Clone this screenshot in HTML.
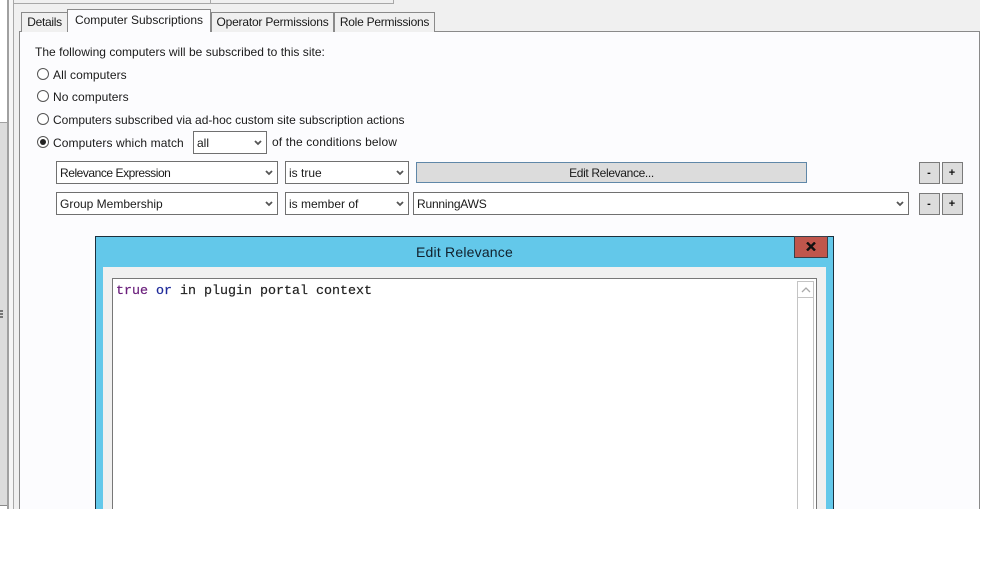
<!DOCTYPE html>
<html><head><meta charset="utf-8"><style>
html,body{margin:0;padding:0;background:#fff;}
body{width:992px;height:569px;position:relative;overflow:hidden;font-family:"Liberation Sans",sans-serif;font-size:12px;color:#1a1a1a;}
.a{position:absolute;box-sizing:border-box;}
.t{position:absolute;white-space:nowrap;line-height:16px;height:16px;}
.tab{position:absolute;box-sizing:border-box;border:1px solid #8a8a8a;border-bottom:none;background:#f0f0f0;text-align:center;white-space:nowrap;}
.sel{position:absolute;box-sizing:border-box;border:1px solid #707070;background:#fff;height:23px;line-height:23px;padding-left:3px;white-space:nowrap;}
.sel svg{position:absolute;right:4px;top:8px;}
.b{position:absolute;box-sizing:border-box;width:21px;height:22px;background:#dcdcdc;border:1px solid #7a7a7a;text-align:center;line-height:20px;color:#111;text-indent:-1px;font-weight:bold;font-size:11px;}
.r{position:absolute;left:37px;width:12px;height:12px;box-sizing:border-box;border:1px solid #555;border-radius:50%;background:#fff;}
</style></head><body>
<div class="a" style="left:0;top:0;width:980px;height:509px;background:#f0f0f0;"></div>
<div class="a" style="left:0;top:0;width:7px;height:509px;background:#fff;"></div>
<div class="a" style="left:0;top:122px;width:7px;height:384px;background:#dcdcdc;border-top:1px solid #a0a0a0;border-bottom:1px solid #8a8a8a;"></div>
<div class="a" style="left:0;top:310px;width:3px;height:2px;background:#777;"></div>
<div class="a" style="left:0;top:313px;width:3px;height:2px;background:#777;"></div>
<div class="a" style="left:0;top:316px;width:3px;height:2px;background:#777;"></div>
<div class="a" style="left:7px;top:0;width:2px;height:509px;background:#a0a0a0;"></div>
<div class="a" style="left:9px;top:0;width:4px;height:509px;background:#f6f6f6;"></div>
<div class="a" style="left:13px;top:0;width:1px;height:509px;background:#a8a8a8;"></div>
<div class="a" style="left:14px;top:3px;width:380px;height:1px;background:#a8a8a8;"></div>
<div class="a" style="left:393px;top:0;width:1px;height:4px;background:#a8a8a8;"></div>
<div class="a" style="left:210px;top:0;width:1px;height:4px;background:#a8a8a8;"></div>

<div class="a" style="left:19px;top:31px;width:961px;height:478px;background:#fcfcfe;border:1px solid #8a8a8a;border-bottom:none;"></div>

<div class="tab" style="left:21px;top:12px;width:47px;height:20px;line-height:19px;letter-spacing:-.3px;">Details</div>
<div class="tab" style="left:211px;top:12px;width:123px;height:20px;line-height:19px;letter-spacing:-.2px;">Operator Permissions</div>
<div class="tab" style="left:334px;top:12px;width:101px;height:20px;line-height:19px;letter-spacing:-.25px;">Role Permissions</div>
<div class="tab" style="left:67px;top:9px;width:144px;height:23px;line-height:20px;background:#fcfcfe;">Computer Subscriptions</div>

<div class="t" style="left:35px;top:44px;letter-spacing:.02px;">The following computers will be subscribed to this site:</div>
<div class="r" style="top:68px;"></div><div class="t" style="left:53px;top:67px;letter-spacing:.08px;">All computers</div>
<div class="r" style="top:90px;"></div><div class="t" style="left:53px;top:89px;letter-spacing:.08px;">No computers</div>
<div class="r" style="top:113px;"></div><div class="t" style="left:53px;top:112px;">Computers subscribed via ad-hoc custom site subscription actions</div>
<div class="r" style="top:136px;"></div><div class="a" style="left:40px;top:139px;width:6px;height:6px;border-radius:50%;background:#222;"></div>
<div class="t" style="left:53px;top:135px;letter-spacing:.1px;">Computers which match</div>
<div class="sel" style="left:193px;top:131px;width:74px;">all<svg width="8" height="6" viewBox="0 0 8 6"><path d="M1 1l3 3 3-3" fill="none" stroke="#555" stroke-width="1.8"/></svg></div>
<div class="t" style="left:272px;top:134px;letter-spacing:.13px;">of the conditions below</div>

<div class="sel" style="left:56px;top:161px;width:222px;letter-spacing:-.45px;">Relevance Expression<svg width="8" height="6" viewBox="0 0 8 6"><path d="M1 1l3 3 3-3" fill="none" stroke="#555" stroke-width="1.8"/></svg></div>
<div class="sel" style="left:285px;top:161px;width:124px;">is true<svg width="8" height="6" viewBox="0 0 8 6"><path d="M1 1l3 3 3-3" fill="none" stroke="#555" stroke-width="1.8"/></svg></div>
<div class="a" style="left:416px;top:162px;width:391px;height:21px;background:#dcdcdc;border:1px solid #5f87a8;text-align:center;line-height:20px;letter-spacing:-.35px;">Edit Relevance...</div>
<div class="b" style="left:919px;top:162px;">-</div><div class="b" style="left:942px;top:162px;">+</div>

<div class="sel" style="left:56px;top:192px;width:222px;">Group Membership<svg width="8" height="6" viewBox="0 0 8 6"><path d="M1 1l3 3 3-3" fill="none" stroke="#555" stroke-width="1.8"/></svg></div>
<div class="sel" style="left:285px;top:192px;width:124px;">is member of<svg width="8" height="6" viewBox="0 0 8 6"><path d="M1 1l3 3 3-3" fill="none" stroke="#555" stroke-width="1.8"/></svg></div>
<div class="sel" style="left:413px;top:192px;width:496px;letter-spacing:-.2px;">RunningAWS<svg width="8" height="6" viewBox="0 0 8 6"><path d="M1 1l3 3 3-3" fill="none" stroke="#555" stroke-width="1.8"/></svg></div>
<div class="b" style="left:919px;top:193px;">-</div><div class="b" style="left:942px;top:193px;">+</div>

<div class="a" style="left:95px;top:236px;width:739px;height:273px;background:#63c8ea;border:1px solid #1c2f3c;border-bottom:none;"></div>
<div class="t" style="left:96px;top:244px;width:737px;text-align:center;font-size:14px;color:#10202c;letter-spacing:.2px;">Edit Relevance</div>
<div class="a" style="left:794px;top:236px;width:34px;height:22px;background:#c0564c;border:1px solid #37404a;text-align:center;"><svg width="10" height="9" viewBox="0 0 10 9" style="margin-top:5px;display:inline-block;"><path d="M1 .5l8 8M9 .5l-8 8" stroke="#111" stroke-width="2.4" fill="none"/></svg></div>
<div class="a" style="left:103px;top:267px;width:723px;height:242px;background:#f0f0f0;"></div>
<div class="a" style="left:112px;top:278px;width:705px;height:231px;background:#fff;border:1px solid #777;border-bottom:none;"></div>
<div class="a" style="left:797px;top:281px;width:17px;height:228px;background:#fff;border:1px solid #c4c4c4;border-bottom:none;"></div>
<div class="a" style="left:798px;top:297px;width:15px;height:1px;background:#c4c4c4;"></div>
<svg class="a" style="left:801px;top:286px;" width="10" height="7" viewBox="0 0 10 7"><path d="M1 6l4-4 4 4" fill="none" stroke="#aaa" stroke-width="1.3"/></svg>
<div class="t" style="left:116px;top:284px;font-family:'Liberation Mono',monospace;font-size:13.33px;color:#222;-webkit-text-stroke:.2px #222;"><span style="color:#6b1f7c;-webkit-text-stroke:.2px #6b1f7c;">true</span> <span style="color:#1e2a9a;-webkit-text-stroke:.2px #1e2a9a;">or</span> in plugin portal context</div>
</body></html>
